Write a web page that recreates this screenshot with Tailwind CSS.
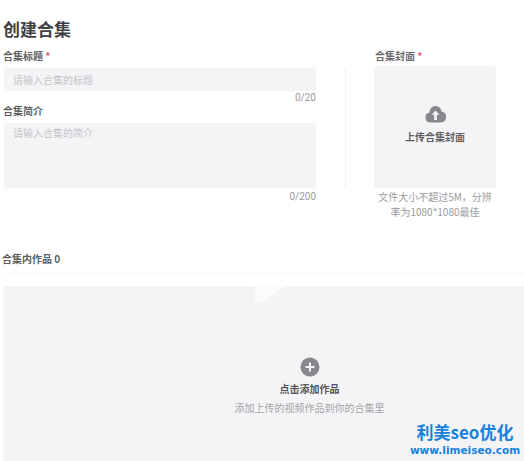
<!DOCTYPE html>
<html lang="zh-CN">
<head>
    <meta charset="UTF-8">
    <title>创建合集</title>
    <script src="https://cdn.jsdelivr.net/npm/@tailwindcss/browser@4"></script>
</head>
<body class="bg-white">
    <div class="relative w-[524px] h-[461px] overflow-hidden bg-white pl-[3px] pt-[18px] font-['Noto_Sans_CJK_SC',sans-serif]">
        <h1 class="text-[17px] leading-[21px] font-bold text-[#3f3f45]">创建合集</h1>

        <div class="flex mt-[10px]">
            <div class="w-[313px] pl-[1px]">
                <p class="text-[10px] leading-[14px] font-bold text-[#5e5e63] -ml-[1px]">合集标题 <span class="text-[#e0607e]">*</span></p>
                <div class="mt-[5px] h-[23px] bg-[#f4f4f6] pl-[9px] text-[10px] leading-[23px] text-[#c4c4c8]">请输入合集的标题</div>
                <p class="mt-[1px] text-right text-[10px] leading-[12px] text-[#9a9a9e] font-['Roboto',sans-serif]">0/20</p>
                <p class="mt-[0px] -ml-[1px] text-[10px] leading-[14px] font-bold text-[#5e5e63]">合集简介</p>
                <div class="mt-[5px] h-[65px] bg-[#f4f4f6] pl-[9px] pt-[3px] text-[10px] leading-[14px] text-[#c4c4c8]">请输入合集的简介</div>
                <p class="mt-[3px] text-right text-[10px] leading-[12px] text-[#9a9a9e] font-['Roboto',sans-serif]">0/200</p>
            </div>

            <div class="w-px h-[120px] bg-[#f1f1f3] ml-[29px] mt-[19px]"></div>

            <div class="w-[122px] ml-[28px]">
                <p class="ml-[1px] text-[10px] leading-[14px] font-bold text-[#6a6a6e]">合集封面 <span class="text-[#e0607e]">*</span></p>
                <div class="mt-[3px] h-[122px] rounded-[3px] bg-[#f4f4f6] flex flex-col items-center pt-[39px]">
                    <svg class="w-[23px] h-[18px]" viewBox="0 0 22 18">
                        <path fill="#88888c" d="M6 17.500a5 5 0 0 1-1-9.900A6.300 6.300 0 0 1 11 1a6.300 6.300 0 0 1 6 5.600 5.500 5.500 0 0 1-.5 10.900z"/>
                        <path fill="#f4f4f6" d="M11 5.500l4 4.300h-2.600v5.200H9.600v-5.200H7z"/>
                    </svg>
                    <p class="mt-[7px] text-[10px] leading-[14px] font-bold text-[#5e5e62]">上传合集封面</p>
                </div>
                <p class="mt-[1px] -mx-[1px] text-center text-[10px] leading-[15px] text-[#9a9a9e]">文件大小不超过5M，分辨<br>率为1080*1080最佳</p>
            </div>
        </div>

        <p class="mt-[33px] ml-[-1px] text-[10px] leading-[14px] font-bold text-[#5e5e62]">合集内作品 0</p>
        <div class="mt-[7px] ml-[1px] h-px bg-[#f7f7f9]"></div>

        <div class="relative mt-[12px] h-[176px] rounded-tl-[4px] bg-[#f4f4f6] flex flex-col items-center pt-[71px]">
            <svg class="absolute left-[252px] top-0 w-[34px] h-[18px]" viewBox="0 0 34 18">
                <path fill="#fbfbfc" d="M0 0h31L5 17c-2 1-5 0-5-3z"/>
            </svg>
            <svg class="w-[20px] h-[20px] ml-[92px]" viewBox="0 0 20 20">
                <circle cx="10" cy="10" r="9.500" fill="#88888c"/>
                <path stroke="#f4f4f6" stroke-width="2" d="M10 5.500v9M5.500 10h9"/>
            </svg>
            <p class="mt-[5px] ml-[92px] text-[10px] leading-[14px] font-bold text-[#55555a]">点击添加作品</p>
            <p class="mt-[5px] ml-[92px] text-[10px] leading-[14px] text-[#a5a5a9]">添加上传的视频作品到你的合集里</p>
        </div>

        <div class="absolute left-[409px] top-[422px] w-[112px] text-center font-bold text-[#1682dc]">
            <p class="text-[17px] leading-[20px] whitespace-nowrap">利美seo优化</p>
            <p class="mt-[1px] text-[10.500px] leading-[14px] whitespace-nowrap font-['DejaVu_Sans',sans-serif]">www.limeiseo.com</p>
        </div>
    </div>
</body>
</html>
